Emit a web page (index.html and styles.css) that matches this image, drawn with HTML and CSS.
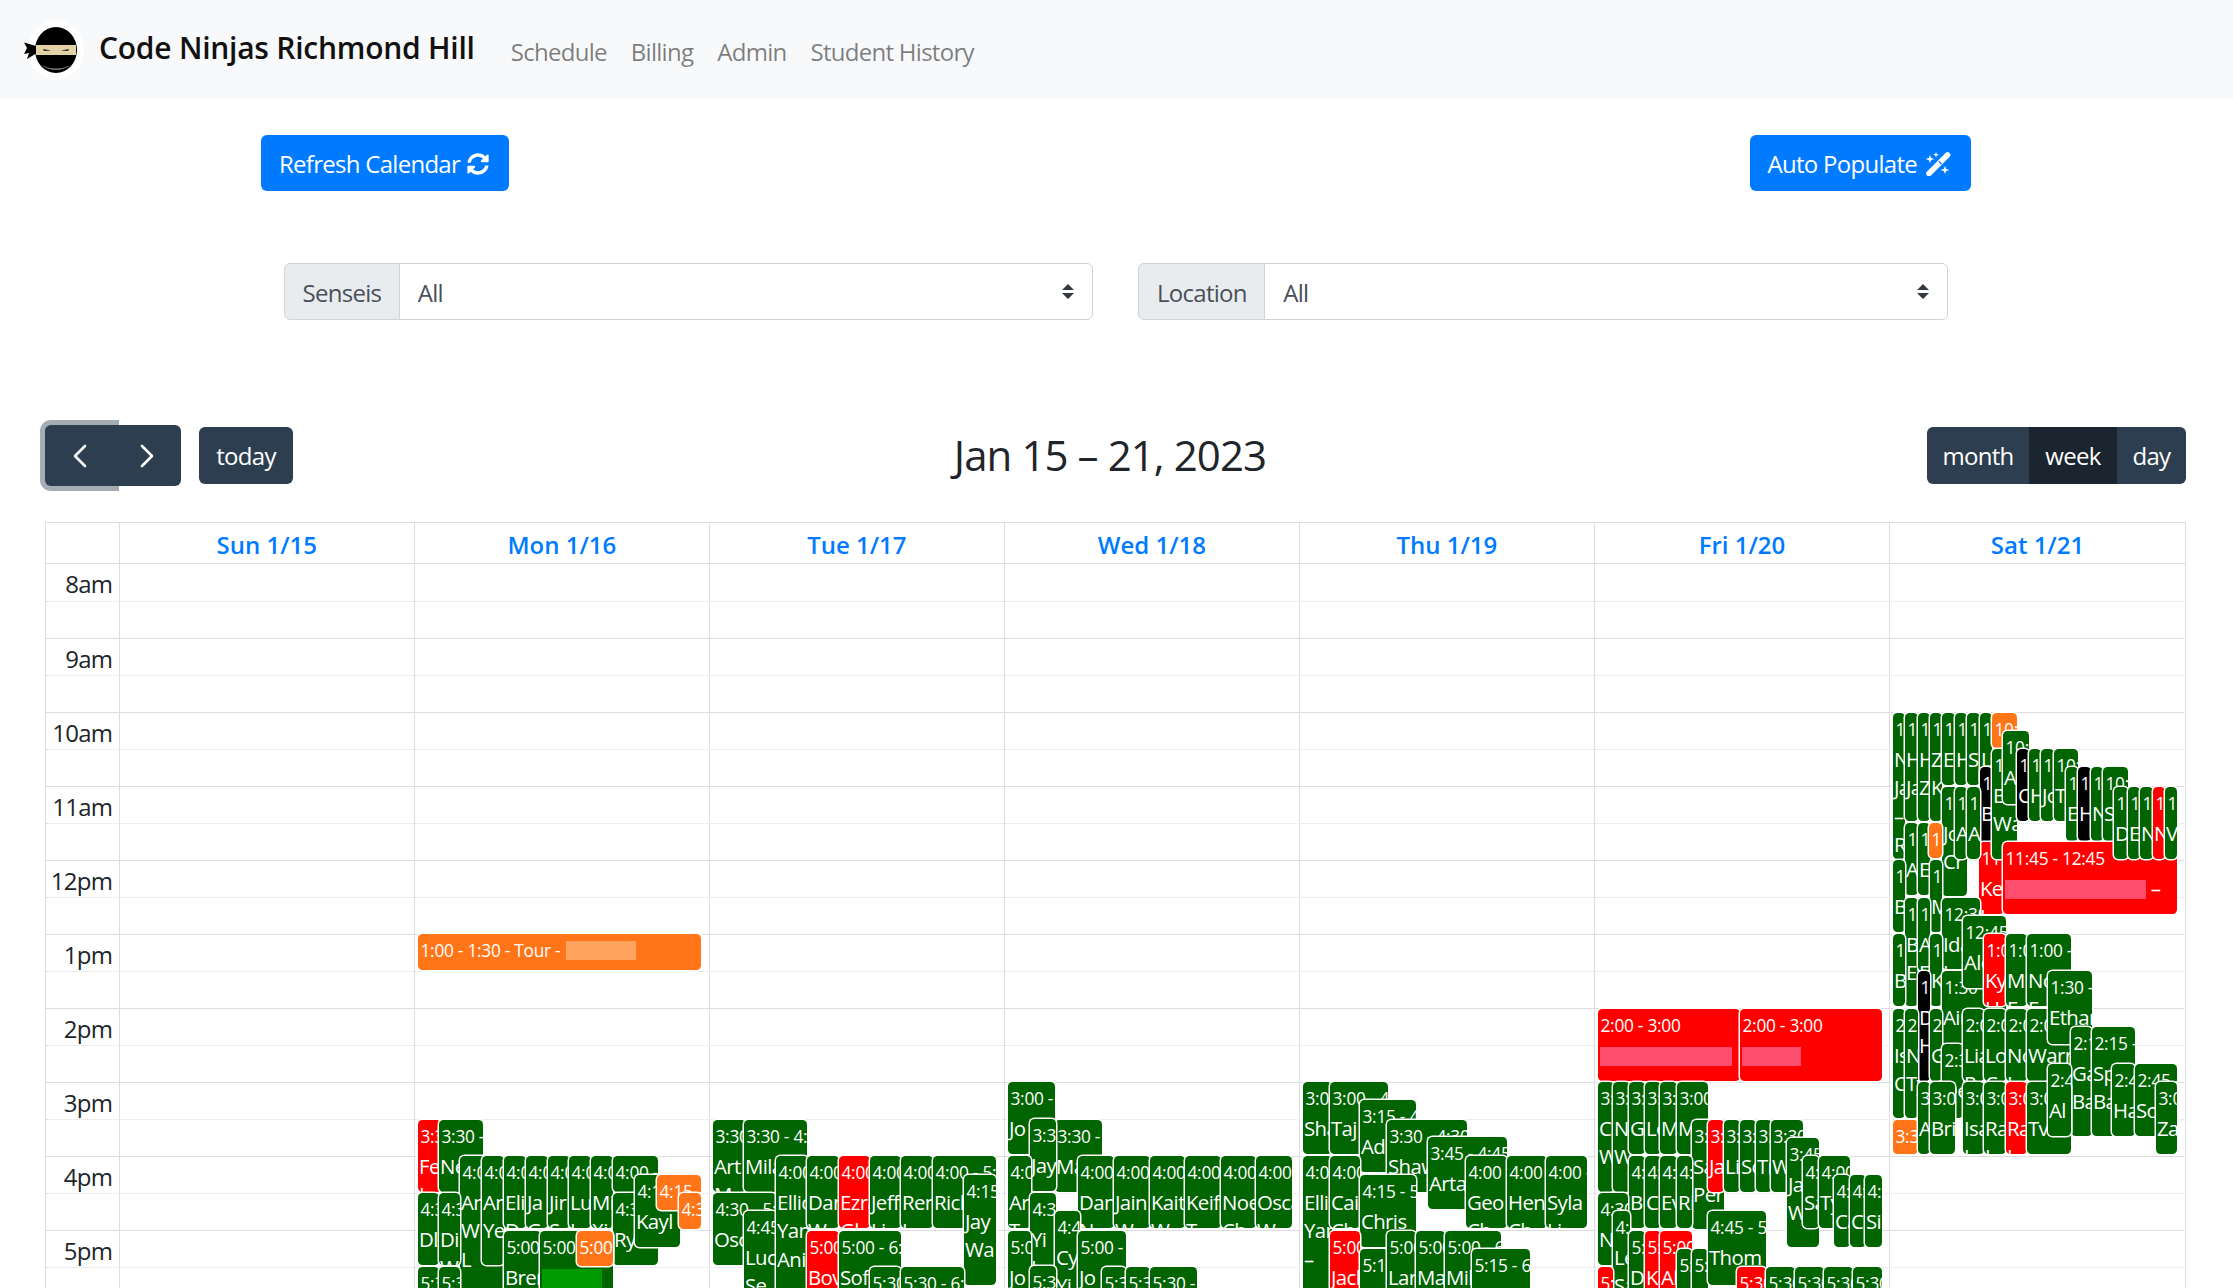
FILE: index.html
```html
<!DOCTYPE html>
<html lang="en">
<head>
<meta charset="utf-8">
<title>Code Ninjas Richmond Hill</title>
<link rel="stylesheet" href="styles.css">
</head>
<body>
<nav class="navbar">
  <a class="brand" href="#">
    <svg class="logo" viewBox="0 0 60 60" width="60" height="60">
      <ellipse cx="32" cy="30" rx="28" ry="30" fill="#fff"/>
      <path d="M12 26 L0 22.5 L3 28 L0 34 L5 33 L3 39 L13 33 Z" fill="#000"/>
      <ellipse cx="32" cy="30" rx="21" ry="23" fill="#000"/>
      <path d="M17 45 Q32 55 47 45 Q32 52 17 45Z" fill="#777"/>
      <rect x="12" y="25" width="40" height="10" fill="#e3d2a6"/>
      <path d="M19 29 L27 30.5 L20 31 Z M45 29 L37 30.5 L44 31 Z" fill="#222"/>
    </svg>
    <span>Code Ninjas Richmond Hill</span>
  </a>
  <a class="link" href="#">Schedule</a>
  <a class="link" href="#">Billing</a>
  <a class="link" href="#">Admin</a>
  <a class="link" href="#">Student History</a>
</nav>

<div class="actions">
  <button class="btn">Refresh Calendar
    <svg viewBox="0 0 512 512" width="22" height="22"><path fill="#fff" d="M370.72 133.28C339.458 104.008 298.888 87.962 255.848 88c-77.458.068-144.328 53.178-162.791 126.85-1.344 5.363-6.122 9.15-11.651 9.15H24.103c-7.498 0-13.194-6.807-11.807-14.176C33.933 94.924 134.813 8 256 8c66.448 0 126.791 26.136 171.315 68.685L463.03 40.97C478.149 25.851 504 36.559 504 57.941V192c0 13.255-10.745 24-24 24H345.941c-21.382 0-32.09-25.851-16.971-40.971l41.75-41.749zM32 296h134.059c21.382 0 32.09 25.851 16.971 40.971l-41.75 41.75c31.262 29.273 71.835 45.319 114.876 45.28 77.418-.07 144.315-53.144 162.787-126.849 1.344-5.363 6.122-9.15 11.651-9.15h57.304c7.498 0 13.194 6.807 11.807 14.176C478.067 417.076 377.187 504 256 504c-66.448 0-126.791-26.136-171.315-68.685L48.97 471.03C33.851 486.149 8 475.441 8 454.059V320c0-13.255 10.745-24 24-24z"/></svg>
  </button>
  <button class="btn">Auto Populate
    <svg viewBox="0 0 27 24" width="27" height="24"><path d="M5 21.5 L23.5 3" stroke="#fff" stroke-width="5.5" stroke-linecap="round" fill="none"/><path d="M15 9.5 L17.5 12" stroke="#007bff" stroke-width="1.6" fill="none"/><path fill="#fff" d="M6 3 L7.2 6 L10.5 7 L7.2 8 L6 11 L4.8 8 L1.5 7 L4.8 6Z M12 0 L12.8 2 L15 2.8 L12.8 3.6 L12 5.6 L11.2 3.6 L9 2.8 L11.2 2Z M21 14 L22.2 17 L25.5 18 L22.2 19 L21 22 L19.8 19 L16.5 18 L19.8 17Z"/></svg>
  </button>
</div>

<div class="filters">
  <div class="group senseis">
    <label class="addon">Senseis</label>
    <select class="select"><option>All</option></select>
  </div>
  <div class="group location">
    <label class="addon">Location</label>
    <select class="select"><option>All</option></select>
  </div>
</div>

<section class="cal">
  <div class="toolbar">
    <div class="tb-left">
      <div class="pair">
        <button class="dark nav-btn focus" aria-label="prev"><svg viewBox="0 0 16 24" width="16" height="24"><path d="M13 2 L3 12 L13 22" stroke="#fff" stroke-width="2.6" fill="none" stroke-linecap="round" stroke-linejoin="round"/></svg></button>
        <button class="dark nav-btn next" aria-label="next"><svg viewBox="0 0 16 24" width="16" height="24"><path d="M3 2 L13 12 L3 22" stroke="#fff" stroke-width="2.6" fill="none" stroke-linecap="round" stroke-linejoin="round"/></svg></button>
      </div>
      <button class="dark today">today</button>
    </div>
    <h2 class="title">Jan 15 – 21, 2023</h2>
    <div class="views">
      <button class="dark">month</button>
      <button class="dark active">week</button>
      <button class="dark">day</button>
    </div>
  </div>

  <div class="grid">
    <div class="head">
      <div class="hc"></div>
      <div class="hc"><a href="#">Sun 1/15</a></div>
      <div class="hc"><a href="#">Mon 1/16</a></div>
      <div class="hc"><a href="#">Tue 1/17</a></div>
      <div class="hc"><a href="#">Wed 1/18</a></div>
      <div class="hc"><a href="#">Thu 1/19</a></div>
      <div class="hc"><a href="#">Fri 1/20</a></div>
      <div class="hc"><a href="#">Sat 1/21</a></div>
    </div>
    <div class="body">
      <div class="rows">
        <div class="slot"><span>8am</span></div><div class="slot half"></div>
        <div class="slot"><span>9am</span></div><div class="slot half"></div>
        <div class="slot"><span>10am</span></div><div class="slot half"></div>
        <div class="slot"><span>11am</span></div><div class="slot half"></div>
        <div class="slot"><span>12pm</span></div><div class="slot half"></div>
        <div class="slot"><span>1pm</span></div><div class="slot half"></div>
        <div class="slot"><span>2pm</span></div><div class="slot half"></div>
        <div class="slot"><span>3pm</span></div><div class="slot half"></div>
        <div class="slot"><span>4pm</span></div><div class="slot half"></div>
        <div class="slot"><span>5pm</span></div><div class="slot half"></div>
      </div>
      <div class="vlines"><i></i><i></i><i></i><i></i><i></i><i></i><i></i><i></i></div>
      <div class="events">
        <!-- Monday -->
        <div class="ev o short" style="--x:418;--y:935;--w:283;--h:36"><span class="line">1:00 - 1:30 - Tour - <span class="bar bo" style="width:70px"></span></span></div>
        <div class="ev r" style="--x:418;--y:1121;--w:23"><span class="t">3:30 - 4:30</span><span class="n">Fe L</span></div>
        <div class="ev g" style="--x:439;--y:1121;--w:44"><span class="t">3:30 - 4:30</span><span class="n">Ne L</span></div>
        <div class="ev g" style="--x:460;--y:1157;--w:44;--h:140"><span class="t">4:00 - 5:30</span><span class="n">An W - L</span></div>
        <div class="ev g" style="--x:482;--y:1157;--w:22;--h:109"><span class="t">4:00 - 5:30</span><span class="n">An Ye</span></div>
        <div class="ev g" style="--x:504;--y:1157;--w:22"><span class="t">4:00 - 5:00</span><span class="n">Eli D</span></div>
        <div class="ev g" style="--x:526;--y:1157;--w:22"><span class="t">4:00 - 5:00</span><span class="n">Ja G</span></div>
        <div class="ev g" style="--x:548;--y:1157;--w:22"><span class="t">4:00 - 5:00</span><span class="n">Jir S</span></div>
        <div class="ev g" style="--x:569;--y:1157;--w:22"><span class="t">4:00 - 5:00</span><span class="n">Lu L</span></div>
        <div class="ev g" style="--x:591;--y:1157;--w:22"><span class="t">4:00 - 5:00</span><span class="n">Mi Xi</span></div>
        <div class="ev g" style="--x:613;--y:1157;--w:45;--h:36"><span class="t">4:00 - 4:30</span><span class="n">Ro</span></div>
        <div class="ev g" style="--x:418;--y:1194;--w:21"><span class="t">4:30 - 5:30</span><span class="n">Dl .</span></div>
        <div class="ev g" style="--x:439;--y:1194;--w:21"><span class="t">4:30 - 5:30</span><span class="n">Di W</span></div>
        <div class="ev g" style="--x:613;--y:1194;--w:45"><span class="t">4:30 - 5:30</span><span class="n">Ry Fi</span></div>
        <div class="ev g" style="--x:635;--y:1176;--w:45"><span class="t">4:15 - 5:15</span><span class="n">Kayl –</span></div>
        <div class="ev o" style="--x:657;--y:1176;--w:44;--h:35"><span class="t">4:15 - 4:45</span><span class="n">Ma</span></div>
        <div class="ev o" style="--x:679;--y:1194;--w:22;--h:36"><span class="t">4:30 - 5:00</span><span class="n">Sa</span></div>
        <div class="ev g" style="--x:504;--y:1232;--w:37"><span class="t">5:00 - 6:00</span><span class="n">Brent</span></div>
        <div class="ev g" style="--x:540;--y:1232;--w:73"><span class="t">5:00 - 6:00</span><span class="n"><span class="bar bg" style="width:60px"></span></span></div>
        <div class="ev o" style="--x:577;--y:1232;--w:36;--h:35"><span class="t">5:00 - 5:30</span><span class="n">Le</span></div>
        <div class="ev g" style="--x:418;--y:1268;--w:21"><span class="t">5:30 - 6:30</span><span class="n">An</span></div>
        <div class="ev g" style="--x:439;--y:1268;--w:21"><span class="t">5:30 - 6:30</span><span class="n">Jo</span></div>
        <!-- Tuesday -->
        <div class="ev g" style="--x:713;--y:1121;--w:33"><span class="t">3:30 - 4:30</span><span class="n">Art M</span></div>
        <div class="ev g" style="--x:744;--y:1121;--w:63"><span class="t">3:30 - 4:30</span><span class="n">Mila Pi</span></div>
        <div class="ev g" style="--x:713;--y:1194;--w:63"><span class="t">4:30 - 5:30</span><span class="n">Osc Ti</span></div>
        <div class="ev g" style="--x:744;--y:1212;--w:33;--h:100"><span class="t">4:45 - 5:45</span><span class="n">Luca Se</span></div>
        <div class="ev g" style="--x:776;--y:1157;--w:32;--h:145"><span class="t">4:00 - 6:00</span><span class="n">Elliot Yan Ani</span></div>
        <div class="ev g" style="--x:807;--y:1157;--w:32"><span class="t">4:00 - 5:00</span><span class="n">Dani W</span></div>
        <div class="ev r" style="--x:839;--y:1157;--w:31"><span class="t">4:00 - 5:00</span><span class="n">Ezra Gl</span></div>
        <div class="ev g" style="--x:870;--y:1157;--w:31"><span class="t">4:00 - 5:00</span><span class="n">Jeff Li</span></div>
        <div class="ev g" style="--x:901;--y:1157;--w:32"><span class="t">4:00 - 5:00</span><span class="n">Ren L</span></div>
        <div class="ev g" style="--x:933;--y:1157;--w:63"><span class="t">4:00 - 5:00</span><span class="n">Rich L</span></div>
        <div class="ev g" style="--x:964;--y:1176;--w:32;--h:110"><span class="t">4:15 - 5:45</span><span class="n">Jay Wa</span></div>
        <div class="ev r" style="--x:807;--y:1232;--w:32"><span class="t">5:00 - 6:00</span><span class="n">Bove</span></div>
        <div class="ev g" style="--x:839;--y:1232;--w:62"><span class="t">5:00 - 6:00</span><span class="n">Sofia</span></div>
        <div class="ev g" style="--x:870;--y:1268;--w:31"><span class="t">5:30 - 6:30</span><span class="n">An</span></div>
        <div class="ev g" style="--x:901;--y:1268;--w:63"><span class="t">5:30 - 6:30</span><span class="n">Ma</span></div>
        <!-- Wednesday -->
        <div class="ev g" style="--x:1008;--y:1083;--w:47"><span class="t">3:00 - 4:00</span><span class="n">Jo L</span></div>
        <div class="ev g" style="--x:1055;--y:1121;--w:47"><span class="t">3:30 - 4:30</span><span class="n">Ma L</span></div>
        <div class="ev g" style="--x:1030;--y:1120;--w:26"><span class="t">3:30 - 4:30</span><span class="n">Jay –</span></div>
        <div class="ev g" style="--x:1008;--y:1157;--w:23"><span class="t">4:00 - 5:00</span><span class="n">Ar T</span></div>
        <div class="ev g" style="--x:1078;--y:1157;--w:36"><span class="t">4:00 - 5:00</span><span class="n">Dani N</span></div>
        <div class="ev g" style="--x:1114;--y:1157;--w:36"><span class="t">4:00 - 5:00</span><span class="n">Jain W</span></div>
        <div class="ev g" style="--x:1150;--y:1157;--w:35"><span class="t">4:00 - 5:00</span><span class="n">Kaitl W</span></div>
        <div class="ev g" style="--x:1185;--y:1157;--w:36"><span class="t">4:00 - 5:00</span><span class="n">Keif T</span></div>
        <div class="ev g" style="--x:1221;--y:1157;--w:35"><span class="t">4:00 - 5:00</span><span class="n">Noel Ch</span></div>
        <div class="ev g" style="--x:1256;--y:1157;--w:36"><span class="t">4:00 - 5:00</span><span class="n">Oscar W</span></div>
        <div class="ev g" style="--x:1030;--y:1194;--w:26"><span class="t">4:30 - 5:30</span><span class="n">Yi L</span></div>
        <div class="ev g" style="--x:1008;--y:1232;--w:23"><span class="t">5:00 - 6:00</span><span class="n">Jo L</span></div>
        <div class="ev g" style="--x:1055;--y:1212;--w:25;--h:100"><span class="t">4:45 - 5:45</span><span class="n">Cy Yi</span></div>
        <div class="ev g" style="--x:1078;--y:1232;--w:48"><span class="t">5:00 - 6:00</span><span class="n">Jo L</span></div>
        <div class="ev g" style="--x:1030;--y:1267;--w:26"><span class="t">5:30 - 6:30</span><span class="n">Ma</span></div>
        <div class="ev g" style="--x:1102;--y:1268;--w:24"><span class="t">5:30 - 6:30</span><span class="n">An</span></div>
        <div class="ev g" style="--x:1126;--y:1268;--w:24"><span class="t">5:30 - 6:30</span><span class="n">Li</span></div>
        <div class="ev g" style="--x:1150;--y:1268;--w:47"><span class="t">5:30 - 6:30</span><span class="n">Ro</span></div>
        <!-- Thursday -->
        <div class="ev g" style="--x:1303;--y:1083;--w:29"><span class="t">3:00 - 4:00</span><span class="n">Sha –</span></div>
        <div class="ev g" style="--x:1330;--y:1083;--w:58"><span class="t">3:00 - 4:00</span><span class="n">Taj –</span></div>
        <div class="ev g" style="--x:1360;--y:1101;--w:56"><span class="t">3:15 - 4:15</span><span class="n">Adam .</span></div>
        <div class="ev g" style="--x:1387;--y:1121;--w:80"><span class="t">3:30 - 4:30</span><span class="n">Shawn</span></div>
        <div class="ev g" style="--x:1428;--y:1138;--w:79"><span class="t">3:45 - 4:45</span><span class="n">Artan .</span></div>
        <div class="ev g" style="--x:1303;--y:1157;--w:29;--h:145"><span class="t">4:00 - 6:00</span><span class="n">Elli Yan –</span></div>
        <div class="ev g" style="--x:1330;--y:1157;--w:30"><span class="t">4:00 - 5:00</span><span class="n">Cai Ch</span></div>
        <div class="ev g" style="--x:1466;--y:1157;--w:41"><span class="t">4:00 - 5:00</span><span class="n">Geo Ch</span></div>
        <div class="ev g" style="--x:1507;--y:1157;--w:40"><span class="t">4:00 - 5:00</span><span class="n">Henr Ch</span></div>
        <div class="ev g" style="--x:1546;--y:1157;--w:41"><span class="t">4:00 - 5:00</span><span class="n">Syla Li</span></div>
        <div class="ev g" style="--x:1360;--y:1176;--w:56"><span class="t">4:15 - 5:15</span><span class="n">Chris –</span></div>
        <div class="ev r" style="--x:1330;--y:1232;--w:30"><span class="t">5:00 - 6:00</span><span class="n">Jack</span></div>
        <div class="ev g" style="--x:1360;--y:1250;--w:28"><span class="t">5:15 - 6:15</span><span class="n">Ma</span></div>
        <div class="ev g" style="--x:1387;--y:1232;--w:29"><span class="t">5:00 - 6:00</span><span class="n">Lara</span></div>
        <div class="ev g" style="--x:1416;--y:1232;--w:29"><span class="t">5:00 - 6:00</span><span class="n">Mak</span></div>
        <div class="ev g" style="--x:1445;--y:1232;--w:56"><span class="t">5:00 - 6:00</span><span class="n">Mila</span></div>
        <div class="ev g" style="--x:1472;--y:1250;--w:58"><span class="t">5:15 - 6:15</span><span class="n">Ro</span></div>
        <!-- Friday -->
        <div class="ev r" style="--x:1598;--y:1010;--w:142"><span class="t">2:00 - 3:00</span><span class="n"><span class="bar br" style="width:132px"></span> –</span></div>
        <div class="ev r" style="--x:1740;--y:1010;--w:142"><span class="t">2:00 - 3:00</span><span class="n"><span class="bar br" style="width:59px"></span></span></div>
        <div class="ev g" style="--x:1598;--y:1083;--w:16;--h:110"><span class="t">3:00 - 4:30</span><span class="n">Ca W</span></div>
        <div class="ev g" style="--x:1613;--y:1083;--w:17;--h:110"><span class="t">3:00 - 4:30</span><span class="n">Ne W</span></div>
        <div class="ev g" style="--x:1629;--y:1083;--w:16"><span class="t">3:00 - 4:00</span><span class="n">Ga</span></div>
        <div class="ev g" style="--x:1645;--y:1083;--w:16"><span class="t">3:00 - 4:00</span><span class="n">Lo</span></div>
        <div class="ev g" style="--x:1660;--y:1083;--w:17"><span class="t">3:00 - 4:00</span><span class="n">Ma</span></div>
        <div class="ev g" style="--x:1677;--y:1083;--w:31"><span class="t">3:00 - 4:00</span><span class="n">Mi</span></div>
        <div class="ev g" style="--x:1692;--y:1121;--w:32;--h:109"><span class="t">3:30 - 5:00</span><span class="n">Sa Per</span></div>
        <div class="ev r" style="--x:1708;--y:1121;--w:16"><span class="t">3:30 - 4:30</span><span class="n">Ja</span></div>
        <div class="ev g" style="--x:1724;--y:1121;--w:16"><span class="t">3:30 - 4:30</span><span class="n">Li</span></div>
        <div class="ev g" style="--x:1740;--y:1121;--w:16"><span class="t">3:30 - 4:30</span><span class="n">So</span></div>
        <div class="ev g" style="--x:1756;--y:1121;--w:16"><span class="t">3:30 - 4:30</span><span class="n">Tr</span></div>
        <div class="ev g" style="--x:1771;--y:1121;--w:32"><span class="t">3:30 - 4:30</span><span class="n">Wa</span></div>
        <div class="ev g" style="--x:1787;--y:1139;--w:32;--h:109"><span class="t">3:45 - 5:15</span><span class="n">Jake W</span></div>
        <div class="ev g" style="--x:1629;--y:1157;--w:16"><span class="t">4:00 - 5:00</span><span class="n">Be</span></div>
        <div class="ev g" style="--x:1645;--y:1157;--w:16"><span class="t">4:00 - 5:00</span><span class="n">Co</span></div>
        <div class="ev g" style="--x:1660;--y:1157;--w:17"><span class="t">4:00 - 5:00</span><span class="n">Ev</span></div>
        <div class="ev g" style="--x:1677;--y:1157;--w:15"><span class="t">4:00 - 5:00</span><span class="n">Ri</span></div>
        <div class="ev g" style="--x:1803;--y:1157;--w:16"><span class="t">4:00 - 5:00</span><span class="n">Sa</span></div>
        <div class="ev g" style="--x:1819;--y:1157;--w:31"><span class="t">4:00 - 5:00</span><span class="n">Ty</span></div>
        <div class="ev g" style="--x:1834;--y:1176;--w:16"><span class="t">4:15 - 5:15</span><span class="n">Ca</span></div>
        <div class="ev g" style="--x:1850;--y:1176;--w:16"><span class="t">4:15 - 5:15</span><span class="n">Co</span></div>
        <div class="ev g" style="--x:1865;--y:1176;--w:17"><span class="t">4:15 - 5:15</span><span class="n">Si</span></div>
        <div class="ev g" style="--x:1598;--y:1194;--w:30"><span class="t">4:30 - 5:30</span><span class="n">Ne –</span></div>
        <div class="ev g" style="--x:1613;--y:1212;--w:17;--h:100"><span class="t">4:45 - 6:15</span><span class="n">Le Sa</span></div>
        <div class="ev g" style="--x:1629;--y:1232;--w:16"><span class="t">5:00 - 6:00</span><span class="n">Da</span></div>
        <div class="ev r" style="--x:1645;--y:1232;--w:16"><span class="t">5:00 - 6:00</span><span class="n">Ka</span></div>
        <div class="ev r" style="--x:1660;--y:1232;--w:32"><span class="t">5:00 - 6:00</span><span class="n">Al</span></div>
        <div class="ev g" style="--x:1677;--y:1250;--w:15"><span class="t">5:15 - 6:15</span><span class="n">Ma</span></div>
        <div class="ev g" style="--x:1692;--y:1250;--w:16"><span class="t">5:15 - 6:15</span><span class="n">Ro</span></div>
        <div class="ev g" style="--x:1708;--y:1212;--w:58;--h:74"><span class="t">4:45 - 5:45</span><span class="n">Thom</span></div>
        <div class="ev r" style="--x:1598;--y:1268;--w:15"><span class="t">5:30 - 6:30</span><span class="n">Ma</span></div>
        <div class="ev r" style="--x:1737;--y:1268;--w:29"><span class="t">5:30 - 6:30</span><span class="n">Sa</span></div>
        <div class="ev g" style="--x:1766;--y:1268;--w:29"><span class="t">5:30 - 6:30</span><span class="n">Da</span></div>
        <div class="ev g" style="--x:1795;--y:1268;--w:29"><span class="t">5:30 - 6:30</span><span class="n">Ev</span></div>
        <div class="ev g" style="--x:1824;--y:1268;--w:29"><span class="t">5:30 - 6:30</span><span class="n">Jo</span></div>
        <div class="ev g" style="--x:1853;--y:1268;--w:29"><span class="t">5:30 - 6:30</span><span class="n">Ke</span></div>
        <!-- Saturday -->
        <div class="ev g" style="--x:1893;--y:714;--w:12;--h:146"><span class="t">10:00 - 12:00</span><span class="n">Na Ja – Ro</span></div>
        <div class="ev g" style="--x:1905;--y:714;--w:13;--h:108"><span class="t">10:00 - 11:30</span><span class="n">Ha Ja</span></div>
        <div class="ev g" style="--x:1918;--y:714;--w:12;--h:108"><span class="t">10:00 - 11:30</span><span class="n">Ha Za</span></div>
        <div class="ev g" style="--x:1930;--y:714;--w:12;--h:108"><span class="t">10:00 - 11:30</span><span class="n">Za Ka</span></div>
        <div class="ev g" style="--x:1942;--y:714;--w:13"><span class="t">10:00 - 11:00</span><span class="n">Ed</span></div>
        <div class="ev g" style="--x:1955;--y:714;--w:12"><span class="t">10:00 - 11:00</span><span class="n">He</span></div>
        <div class="ev g" style="--x:1967;--y:714;--w:13"><span class="t">10:00 - 11:00</span><span class="n">Sa</span></div>
        <div class="ev g" style="--x:1980;--y:714;--w:12"><span class="t">10:00 - 11:00</span><span class="n">Li</span></div>
        <div class="ev o" style="--x:1992;--y:714;--w:25;--h:35"><span class="t">10:00 - 10:30</span><span class="n">Ma</span></div>
        <div class="ev k" style="--x:1980;--y:768;--w:12;--h:75"><span class="t">10:45 - 11:45</span><span class="n">Be</span></div>
        <div class="ev r" style="--x:1979;--y:843;--w:25"><span class="t">11:45 - 12:45</span><span class="n">Ke L</span></div>
        <div class="ev g" style="--x:1992;--y:750;--w:25;--h:110"><span class="t">10:30 - 12:00</span><span class="n">Be Wa</span></div>
        <div class="ev g" style="--x:2003;--y:732;--w:26;--h:73"><span class="t">10:15 - 11:15</span><span class="n">Al</span></div>
        <div class="ev k" style="--x:2017;--y:750;--w:12"><span class="t">10:30 - 11:30</span><span class="n">Ch</span></div>
        <div class="ev g" style="--x:2029;--y:750;--w:12"><span class="t">10:30 - 11:30</span><span class="n">He</span></div>
        <div class="ev g" style="--x:2041;--y:750;--w:13"><span class="t">10:30 - 11:30</span><span class="n">Jo</span></div>
        <div class="ev g" style="--x:2054;--y:750;--w:24"><span class="t">10:30 - 11:30</span><span class="n">Ti</span></div>
        <div class="ev g" style="--x:2066;--y:768;--w:12;--h:74"><span class="t">10:45 - 11:45</span><span class="n">Ed</span></div>
        <div class="ev k" style="--x:2078;--y:768;--w:13;--h:74"><span class="t">10:45 - 11:45</span><span class="n">Ha</span></div>
        <div class="ev g" style="--x:2091;--y:768;--w:12;--h:74"><span class="t">10:45 - 11:45</span><span class="n">Na</span></div>
        <div class="ev g" style="--x:2103;--y:768;--w:25;--h:74"><span class="t">10:45 - 11:45</span><span class="n">Sa</span></div>
        <div class="ev g" style="--x:1942;--y:788;--w:25;--h:109"><span class="t">11:00 - 12:30</span><span class="n">Jo Cr</span></div>
        <div class="ev g" style="--x:1955;--y:788;--w:12"><span class="t">11:00 - 12:00</span><span class="n">Al</span></div>
        <div class="ev g" style="--x:1967;--y:788;--w:13"><span class="t">11:00 - 12:00</span><span class="n">Ar</span></div>
        <div class="ev r" style="--x:2003;--y:843;--w:174"><span class="t">11:45 - 12:45</span><span class="n"><span class="bar br" style="width:141px"></span> –</span></div>
        <div class="ev g" style="--x:2114;--y:788;--w:14"><span class="t">11:00 - 12:00</span><span class="n">De</span></div>
        <div class="ev g" style="--x:2128;--y:788;--w:12"><span class="t">11:00 - 12:00</span><span class="n">Ed</span></div>
        <div class="ev g" style="--x:2140;--y:788;--w:13"><span class="t">11:00 - 12:00</span><span class="n">Na</span></div>
        <div class="ev r" style="--x:2153;--y:788;--w:12"><span class="t">11:00 - 12:00</span><span class="n">No</span></div>
        <div class="ev g" style="--x:2165;--y:788;--w:12"><span class="t">11:00 - 12:00</span><span class="n">Vi</span></div>
        <div class="ev g" style="--x:1905;--y:824;--w:13"><span class="t">11:30 - 12:30</span><span class="n">Al</span></div>
        <div class="ev g" style="--x:1918;--y:824;--w:12"><span class="t">11:30 - 12:30</span><span class="n">Ed</span></div>
        <div class="ev o" style="--x:1929;--y:824;--w:13;--h:35"><span class="t">11:30 - 12:00</span><span class="n">Ma</span></div>
        <div class="ev g" style="--x:1893;--y:861"><span class="t">12:00 - 1:00</span><span class="n">Be</span></div>
        <div class="ev g" style="--x:1930;--y:861;--w:12"><span class="t">12:00 - 1:00</span><span class="n">Mi</span></div>
        <div class="ev g" style="--x:1905;--y:899;--w:13;--h:108"><span class="t">12:30 - 2:00</span><span class="n">Ba Ev</span></div>
        <div class="ev g" style="--x:1918;--y:899;--w:12;--h:73"><span class="t">12:30 - 1:30</span><span class="n">Al Ev</span></div>
        <div class="ev g" style="--x:1942;--y:899;--w:38;--h:71"><span class="t">12:30 - 1:30</span><span class="n">Ida L</span></div>
        <div class="ev g" style="--x:1893;--y:935;--w:12"><span class="t">1:00 - 2:00</span><span class="n">Be</span></div>
        <div class="ev g" style="--x:1930;--y:935;--w:12"><span class="t">1:00 - 2:00</span><span class="n">Ka</span></div>
        <div class="ev g" style="--x:1942;--y:972;--w:64;--h:73"><span class="t">1:30 - 2:30</span><span class="n">Ain –</span></div>
        <div class="ev g" style="--x:1963;--y:917;--w:43"><span class="t">12:45 - 1:45</span><span class="n">Alex –</span></div>
        <div class="ev r" style="--x:1984;--y:935;--w:22"><span class="t">1:00 - 2:00</span><span class="n">Kyle H</span></div>
        <div class="ev g" style="--x:2006;--y:935;--w:21"><span class="t">1:00 - 2:00</span><span class="n">Mi F</span></div>
        <div class="ev g" style="--x:2027;--y:935;--w:44"><span class="t">1:00 - 2:00</span><span class="n">Noah F</span></div>
        <div class="ev k" style="--x:1918;--y:972;--w:12;--h:110"><span class="t">1:30 - 3:00</span><span class="n">Da He</span></div>
        <div class="ev g" style="--x:1893;--y:1010;--w:12;--h:109"><span class="t">2:00 - 3:30</span><span class="n">Isa Ch</span></div>
        <div class="ev g" style="--x:1905;--y:1010;--w:13;--h:109"><span class="t">2:00 - 3:30</span><span class="n">Na Ty</span></div>
        <div class="ev g" style="--x:1930;--y:1010;--w:12"><span class="t">2:00 - 3:00</span><span class="n">Ga</span></div>
        <div class="ev g" style="--x:1942;--y:1045;--w:21;--h:74"><span class="t">2:30 - 3:30</span><span class="n">Dev S</span></div>
        <div class="ev g" style="--x:1963;--y:1010;--w:21"><span class="t">2:00 - 3:00</span><span class="n">Liam P</span></div>
        <div class="ev g" style="--x:1984;--y:1010;--w:22"><span class="t">2:00 - 3:00</span><span class="n">Lo C</span></div>
        <div class="ev g" style="--x:2006;--y:1010;--w:21"><span class="t">2:00 - 3:00</span><span class="n">Noa L</span></div>
        <div class="ev g" style="--x:2027;--y:1010;--w:44"><span class="t">2:00 - 3:00</span><span class="n">Warren</span></div>
        <div class="ev g" style="--x:2048;--y:972;--w:44;--h:73"><span class="t">1:30 - 2:30</span><span class="n">Ethan –</span></div>
        <div class="ev g" style="--x:2071;--y:1028;--w:21;--h:109"><span class="t">2:15 - 3:45</span><span class="n">Ga Ba</span></div>
        <div class="ev g" style="--x:2092;--y:1028;--w:43;--h:109"><span class="t">2:15 - 3:45</span><span class="n">Spe Ba</span></div>
        <div class="ev g" style="--x:1963;--y:1083;--w:21"><span class="t">3:00 - 4:00</span><span class="n">Isa L</span></div>
        <div class="ev g" style="--x:1984;--y:1083;--w:22"><span class="t">3:00 - 4:00</span><span class="n">Ray L</span></div>
        <div class="ev r" style="--x:2006;--y:1083;--w:21"><span class="t">3:00 - 4:00</span><span class="n">Ra L</span></div>
        <div class="ev g" style="--x:2027;--y:1083;--w:44"><span class="t">3:00 - 4:00</span><span class="n">Tv .</span></div>
        <div class="ev g" style="--x:2048;--y:1065;--w:23"><span class="t">2:45 - 3:45</span><span class="n">Al .</span></div>
        <div class="ev g" style="--x:2112;--y:1065;--w:23"><span class="t">2:45 - 3:45</span><span class="n">Ha –</span></div>
        <div class="ev g" style="--x:2135;--y:1065;--w:42"><span class="t">2:45 - 3:45</span><span class="n">So –</span></div>
        <div class="ev g" style="--x:2156;--y:1083;--w:21"><span class="t">3:00 - 4:00</span><span class="n">Za –</span></div>
        <div class="ev o" style="--x:1893;--y:1121;--w:25;--h:34"><span class="t">3:30 - 4:00</span><span class="n">Ma</span></div>
        <div class="ev g" style="--x:1918;--y:1083;--w:12"><span class="t">3:00 - 4:00</span><span class="n">Al</span></div>
        <div class="ev g" style="--x:1930;--y:1083;--w:25"><span class="t">3:00 - 4:00</span><span class="n">Bri –</span></div>
      </div>
    </div>
  </div>
</section>
</body>
</html>
```
FILE: styles.css
```css
* { box-sizing: border-box; }
html, body { height: 100vh; overflow: hidden; }
body {
  margin: 0;
  font-family: "Open Sans", "Noto Sans", sans-serif;
  font-size: 24px;
  line-height: 1.5;
  letter-spacing: -0.03em;
  color: #212529;
  background: #fff;
}
a { text-decoration: none; }
button { font: inherit; letter-spacing: inherit; border: 0; cursor: pointer; }

/* navbar */
.navbar {
  height: 99px;
  display: flex;
  align-items: center;
  padding-left: 24px;
  background: #f8f9fa;
}
.brand {
  display: flex;
  align-items: center;
  gap: 15px;
  font-size: 30px;
  font-weight: 600;
  letter-spacing: -0.008em;
  color: #111;
  margin-right: 24px;
}
.brand span { margin-top: -4px; }
.link { color: rgba(0,0,0,.5); padding: 5px 12px; margin-top: 4px; }

/* action buttons */
.actions {
  display: flex;
  justify-content: space-between;
  padding: 36px 262px 0 261px;
}
.btn {
  height: 56px;
  padding: 2px 20px 0 18px;
  display: flex;
  align-items: center;
  gap: 7px;
  color: #fff;
  background: #007bff;
  border-radius: 6px;
}

/* filters */
.filters { display: flex; gap: 45px; margin: 72px 0 0 283.5px; }
.group { display: flex; height: 57px; }
.senseis { width: 809.5px; }
.location { width: 809.5px; }
.addon {
  display: flex;
  align-items: center;
  padding: 2px 18px 0;
  color: #495057;
  background: #e9ecef;
  border: 1.5px solid #ced4da;
  border-radius: 6px 0 0 6px;
}
.select {
  flex: 1;
  margin-left: -1.5px;
  padding: 2px 18px 0;
  font: inherit;
  letter-spacing: inherit;
  color: #495057;
  border: 1.5px solid #ced4da;
  border-radius: 0 6px 6px 0;
  appearance: none;
  background: #fff url("data:image/svg+xml,%3Csvg xmlns='http://www.w3.org/2000/svg' viewBox='0 0 4 5'%3E%3Cpath fill='%23343a40' d='M2 0L0 2h4zm0 5L0 3h4z'/%3E%3C/svg%3E") no-repeat right 18px center / 12px 15px;
}

/* calendar */
.cal { margin: 105px 47px 0 45px; }
.toolbar {
  display: flex;
  justify-content: space-between;
  align-items: center;
  height: 61px;
  margin-bottom: 36px;
}
.dark {
  height: 57px;
  padding: 0 18px;
  color: #fff;
  background: #2c3e50;
  border-radius: 6px;
}
.dark.active { background: #1a252f; }
.tb-left { display: flex; align-items: center; gap: 18px; }
.pair { display: flex; }
.nav-btn {
  height: 61px;
  width: 69px;
  display: flex;
  align-items: center;
  justify-content: center;
}
.nav-btn.focus {
  position: relative;
  z-index: 1;
  border-radius: 6px 0 0 6px;
  box-shadow: 0 0 0 5px rgba(76,91,106,.5);
  clip-path: inset(-5px 0 -5px -5px);
  width: 74px;
  padding: 0 5px 0 0;
}
.nav-btn.next { width: 62px; border-radius: 0 6px 6px 0; padding: 0 18px 0 11px; }
.today { width: 94px; padding: 0; }
.title { margin: 0; font-size: 42px; font-weight: 500; letter-spacing: -0.022em; line-height: 1.2; }
.views { display: grid; grid-template-columns: 102px 88px 69px; }
.views .dark { border-radius: 0; padding: 0; }
.views .dark:first-child { border-radius: 6px 0 0 6px; }
.views .dark:last-child { border-radius: 0 6px 6px 0; }

/* time grid */
.grid {
  width: 2141px;
  border: solid #ddd;
  border-width: 1.5px 1.5px 0;
}
.head {
  display: grid;
  grid-template-columns: 73.8px repeat(7, 1fr);
  height: 41px;
  border-bottom: 1.5px solid #ddd;
}
.hc {
  border-right: 1.5px solid #ddd;
  text-align: center;
  font-weight: 600;
  letter-spacing: 0;
  line-height: 43px;
}
.hc:last-child { border-right: 0; }
.hc a { color: #007bff; }
.body { position: relative; }
.slot {
  height: 37px;
  padding-right: 7.5px;
  border-top: 1.5px solid #ddd;
  width: 73.8px;
  line-height: 40px;
  text-align: right;
  position: relative;
}
.slot::after {
  content: "";
  position: absolute;
  left: 0;
  top: -1.5px;
  width: 2138px;
  border-top: 1.5px solid #ddd;
}
.slot:first-child::after { display: none; }
.slot:first-child { border-top: 0; }
.slot.half { border-top: 0; }
.slot.half::after { border-top: 1.5px dotted #ddd; top: 0; }
.vlines {
  position: absolute;
  inset: 0;
  display: grid;
  grid-template-columns: 73.8px repeat(7, 1fr);
  pointer-events: none;
}
.vlines i { border-right: 1.5px solid #ddd; }
.vlines i:last-child { border-right: 0; }

.events { position: absolute; inset: 0; }
.ev {
  position: absolute;
  left: calc(var(--x) * 1px - 46.5px);
  top: calc(var(--y) * 1px - 565.5px);
  width: calc(var(--w, 12) * 1px);
  height: calc(var(--h, 72) * 1px);
  padding: 0 1.5px;
  overflow: hidden;
  font-size: 20.4px;
  line-height: 1.4;
  letter-spacing: -0.03em;
  color: #fff;
  border-radius: 4.5px;
  box-shadow: 0 0 0 1.5px #fff;
}
.g { background: #006400; }
.r { background: #f00; }
.o { background: #ff7518; }
.k { background: #000; }
.t {
  display: block;
  height: 32px;
  padding: 4px 0 0 1.5px;
  font-size: 17.3px;
  letter-spacing: -0.015em;
  white-space: nowrap;
  line-height: 26px;
}
.n { display: block; }
.short { padding: 4px 0 0 3px; font-size: 17.3px; letter-spacing: -0.015em; line-height: 25px; white-space: nowrap; }
.bar {
  display: inline-block;
  height: 19px;
  vertical-align: -3px;
  margin-left: 1px;
}
.br { background: #ff4d6d; }
.bo { background: #ffa35f; }
.bg { background: #090; }
```
